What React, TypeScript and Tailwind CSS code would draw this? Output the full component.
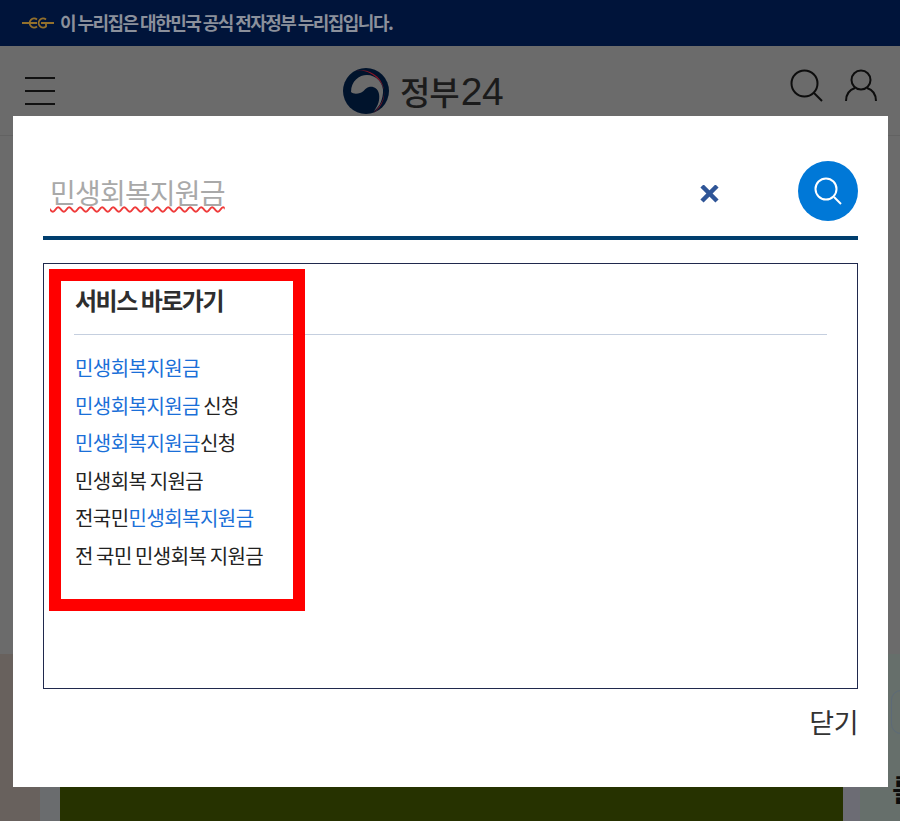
const font = { fontFamily: '"Noto Sans CJK KR", "Noto Sans", sans-serif' };

const shortcuts: { text: string; hit: boolean }[][] = [
  [{ text: "민생회복지원금", hit: true }],
  [{ text: "민생회복지원금", hit: true }, { text: " 신청", hit: false }],
  [{ text: "민생회복지원금", hit: true }, { text: "신청", hit: false }],
  [{ text: "민생회복 지원금", hit: false }],
  [{ text: "전국민", hit: false }, { text: "민생회복지원금", hit: true }],
  [{ text: "전 국민 민생회복 지원금", hit: false }],
];

function Taegeuk() {
  return (
    <svg width="46" height="46" viewBox="0 0 46 46">
      <circle cx="23" cy="23" r="23" fill="#00132c" />
      <path d="M11 3.400A23 23 0 0 1 30 45C38 38 42 30 41 22C39 11 24 -1 11 3.400Z" fill="#8c1626" />
      <path d="M8 24C8 13 16 7 24 7C33 7 41 15 40 25C39 35 35 40 31 43C35 38 37 32 36 26C35 20 30 18 26 19C22 20 21 24 17 25C14 26 10 26 8 24Z" fill="#6b6b6b" />
    </svg>
  );
}

function Page() {
  return (
    <div className="relative h-[821px] w-[900px] overflow-hidden bg-[#6b6b6b]">
      <div className="flex h-[46px] items-center bg-[#00143a] pl-[22px]">
        <svg width="32" height="14" viewBox="0 0 32 14" fill="none" stroke="#93702c" strokeWidth="1.800">
          <path d="M0 7h13M15 3.500a4.500 4.500 0 1 0 0 7M9 7h6" />
          <path d="M24 3.500a4.500 4.500 0 1 0 0 7V7h-5M24 7h8" />
        </svg>
        <p className="ml-[6px] -translate-y-px text-[18px] font-bold tracking-[-1.550px] text-[#8b909b]">
          이 누리집은 대한민국 공식 전자정부 누리집입니다.
        </p>
      </div>

      <header className="flex h-[90px] items-start border-b border-[#626262] pl-[25px] pr-[23px] pt-[22px]">
        <div className="mt-[9px] flex w-[30px] flex-col gap-[11px]">
          <span className="h-[2px] bg-[#111]" />
          <span className="h-[2px] bg-[#111]" />
          <span className="h-[2px] bg-[#111]" />
        </div>
        <div className="ml-[288px] flex items-center gap-[11px]">
          <Taegeuk />
          <span className="flex items-baseline gap-[2px] text-[#1b1b1b]">
            <span className="text-[33px] leading-[44px] font-medium tracking-[-1px]">정부</span>
            <span className="font-['Liberation_Sans'] text-[39px] leading-[44px] tracking-[-0.500px]">24</span>
          </span>
        </div>
        <div className="ml-auto flex gap-[22px] pt-[1px]">
          <svg width="33" height="33" viewBox="0 0 33 33" fill="none" stroke="#0d0d0d" strokeWidth="2">
            <circle cx="14.500" cy="14.500" r="13" />
            <path d="M24 24l8 8" />
          </svg>
          <svg width="32" height="33" viewBox="0 0 32 33" fill="none" stroke="#0d0d0d" strokeWidth="2">
            <circle cx="16" cy="11" r="9.500" />
            <path d="M1 32c0-7 3-11 9-13M31 32c0-7-3-11-9-13" />
          </svg>
        </div>
      </header>

      <div className="h-[518px] bg-[#6b6b6b]" />

      <section className="flex h-[167px] bg-[#666f6b]">
        <div className="w-[40px] shrink-0 bg-[#68615d]" />
        <div className="w-[20px] shrink-0 bg-[#6a6c6e]" />
        <div className="mt-[133px] w-[783px] shrink-0 bg-[#263200]" />
        <div className="mt-[133px] w-[17px] shrink-0 bg-[#6c6c74]" />
        <div className="ml-[31px] mt-[36px] h-[44px] w-[30px] shrink-0 rounded-l-[10px] border border-[#5c6a78]" />
      </section>
      <span className="absolute left-[892px] top-[766px] text-[30px] font-bold text-[#0c0c0c]">를</span>
    </div>
  );
}

export default function App() {
  return (
    <div style={font} className="relative h-[821px] w-[900px] overflow-hidden">
      <Page />
      <div className="absolute left-[13px] top-[116px] flex h-[671px] w-[875px] flex-col bg-white px-[30px] pt-[45px]">
        <div className="flex h-[79px] items-start justify-between border-b-4 border-[#003e6e]">
          <span className="ml-[7px] mt-[11px] text-[28px] leading-[40px] tracking-[-0.800px] text-[#a9a9a9] underline decoration-[#ef3a3a] decoration-wavy decoration-[1.500px] underline-offset-[2px]">
            민생회복지원금
          </span>
          <div className="flex items-start">
            <svg className="mr-[78px] mt-[24px]" width="20" height="18" viewBox="0 0 20 18" fill="none" stroke="#2f5597" strokeWidth="4.500">
              <path d="M2 1l15 15M17 1L2 16" />
            </svg>
            <button className="flex h-[60px] w-[60px] items-center justify-center rounded-full bg-[#0078d7]">
              <svg width="28" height="28" viewBox="0 0 28 28" fill="none" stroke="#fff" strokeWidth="2">
                <circle cx="12" cy="12" r="10.500" />
                <path d="M20 20l7 7" />
              </svg>
            </button>
          </div>
        </div>

        <div className="mt-[23px] h-[426px] border border-[#20294d] px-[30px] pt-[15px]">
          <h2 className="h-[56px] border-b border-[#c5cfdf] pl-px text-[24px] leading-[42px] font-bold tracking-[-1.500px] text-[#2e2e2e]">
            서비스 바로가기
          </h2>
          <ul className="mt-[14px] pl-px text-[20px] tracking-[-0.550px] text-[#222] [word-spacing:-0.700px]">
            {shortcuts.map((parts, i) => (
              <li key={i} className="h-[37.500px] whitespace-pre leading-[37px]">
                {parts.map((part, j) => (
                  <span key={j} className={part.hit ? "text-[#1a6fd8]" : ""}>
                    {part.text}
                  </span>
                ))}
              </li>
            ))}
          </ul>
        </div>

        <div className="mt-[15px] text-right text-[27px] leading-[36px] tracking-[-0.500px] text-[#333]">닫기</div>
      </div>
      <div className="absolute left-[49px] top-[269px] h-[342px] w-[256px] border-[12px] border-[#ff0000]" />
    </div>
  );
}
